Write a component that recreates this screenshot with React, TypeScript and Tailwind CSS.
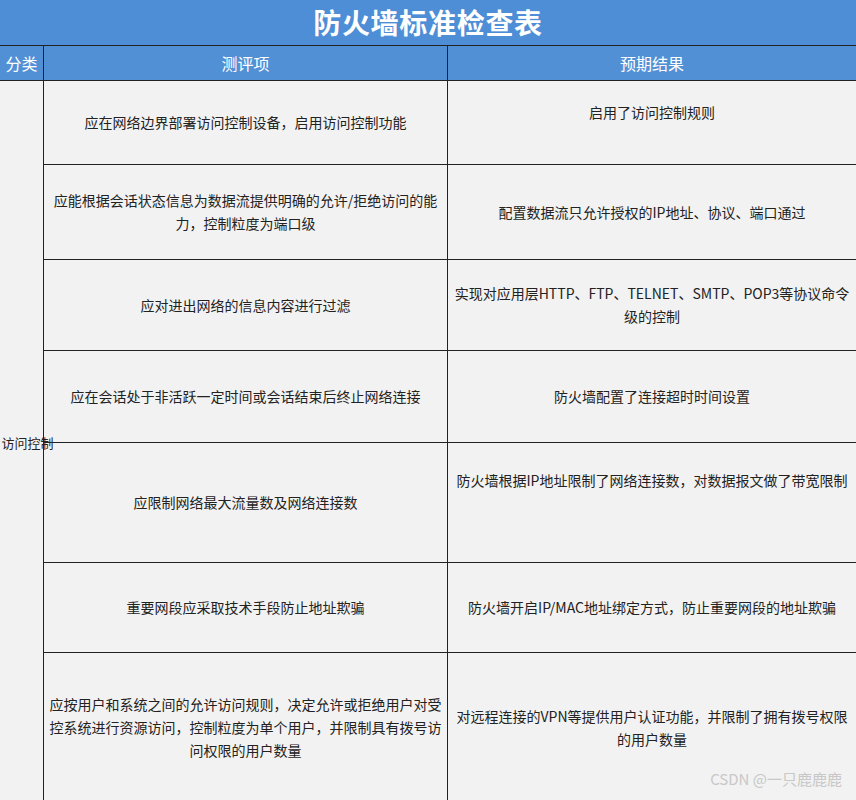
const rows: { h: string; item: string; result: string; rAlign?: string }[] = [
  { h: "h-[84px]", item: "应在网络边界部署访问控制设备，启用访问控制功能", result: "启用了访问控制规则", rAlign: "items-start pt-[20px]" },
  { h: "h-[95px]", item: "应能根据会话状态信息为数据流提供明确的允许/拒绝访问的能力，控制粒度为端口级", result: "配置数据流只允许授权的IP地址、协议、端口通过" },
  { h: "h-[91px]", item: "应对进出网络的信息内容进行过滤", result: "实现对应用层HTTP、FTP、TELNET、SMTP、POP3等协议命令级的控制" },
  { h: "h-[92px]", item: "应在会话处于非活跃一定时间或会话结束后终止网络连接", result: "防火墙配置了连接超时时间设置" },
  { h: "h-[120px]", item: "应限制网络最大流量数及网络连接数", result: "防火墙根据IP地址限制了网络连接数，对数据报文做了带宽限制", rAlign: "items-start pt-[26px]" },
  { h: "h-[90px]", item: "重要网段应采取技术手段防止地址欺骗", result: "防火墙开启IP/MAC地址绑定方式，防止重要网段的地址欺骗" },
  { h: "h-[150px]", item: "应按用户和系统之间的允许访问规则，决定允许或拒绝用户对受控系统进行资源访问，控制粒度为单个用户，并限制具有拨号访问权限的用户数量", result: "对远程连接的VPN等提供用户认证功能，并限制了拥有拨号权限的用户数量" },
];

export default function App() {
  return (
    <div className="w-[856px] h-[800px] overflow-hidden bg-[#f2f2f2] text-[14px] leading-[23px] text-[#222] relative" style={{ fontFamily: '"Microsoft YaHei", "Noto Sans CJK SC", sans-serif' }}>
      <div className="h-[45px] bg-[#4d8ed6] flex items-center justify-center text-white text-[28px] font-bold tracking-wide">
        防火墙标准检查表
      </div>
      <div className="grid grid-cols-[44px_404px_1fr] h-[36px] bg-[#5290d6] text-white text-[16px] border-y border-[#222]">
        <div className="flex items-center justify-center border-r border-[#222]">分类</div>
        <div className="flex items-center justify-center border-r border-[#222]">测评项</div>
        <div className="flex items-center justify-center">预期结果</div>
      </div>
      <div className="grid grid-cols-[44px_404px_1fr]">
        <div className="flex items-center justify-center border-r border-[#222] text-[13px] whitespace-nowrap">
          <span className="pl-[12px]">访问控制</span>
        </div>
        <div className="col-span-2 flex flex-col">
          {rows.map((r, i) => (
            <div key={i} className={`grid grid-cols-[404px_1fr] ${r.h} border-b border-[#222]`}>
              <div className="flex items-center justify-center text-center px-[3px] border-r border-[#222]">{r.item}</div>
              <div className={`flex ${r.rAlign ?? "items-center"} justify-center text-center px-[3px]`}>{r.result}</div>
            </div>
          ))}
        </div>
      </div>
      <div className="absolute right-[14px] bottom-[10px] text-[15px] text-[#c8c8c8]">CSDN @一只鹿鹿鹿</div>
    </div>
  );
}
